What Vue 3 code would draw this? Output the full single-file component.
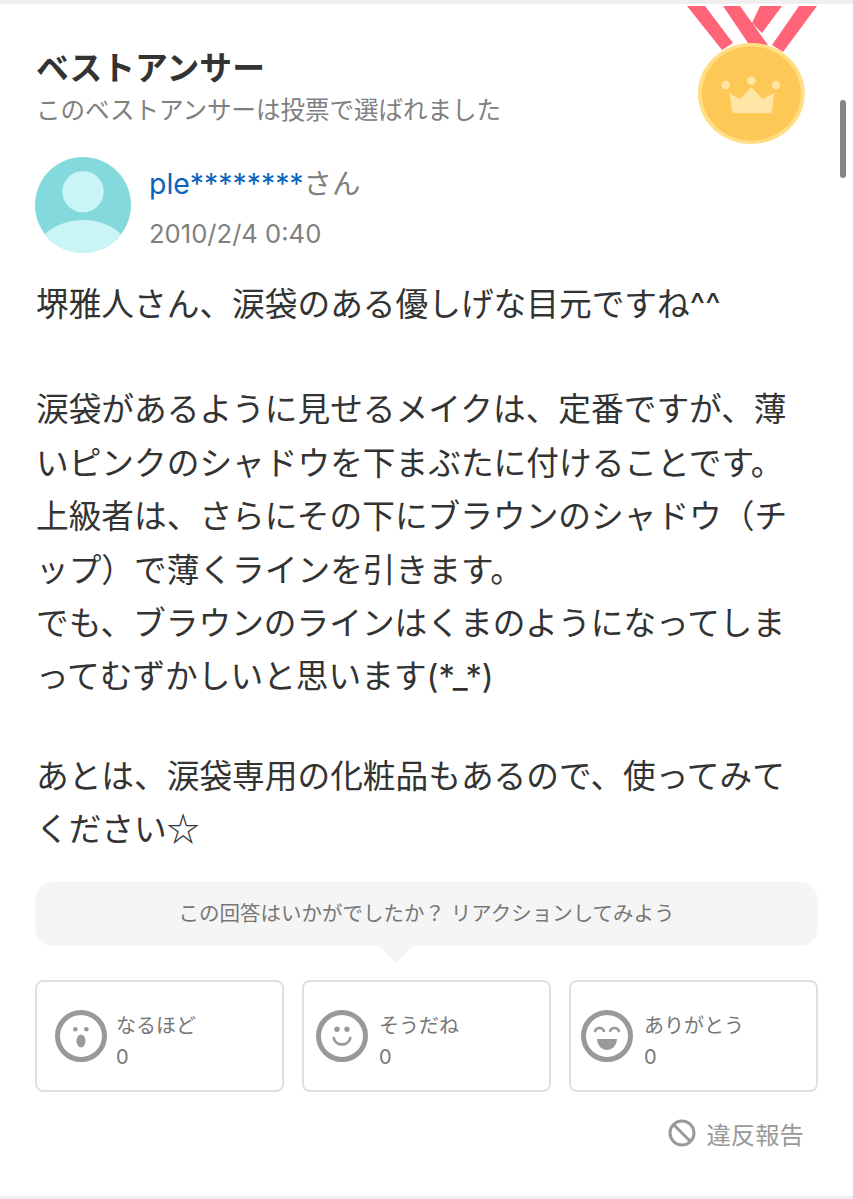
<script setup>
const reactions = [
  { label: 'なるほど', count: 0, face: 'wow' },
  { label: 'そうだね', count: 0, face: 'smile' },
  { label: 'ありがとう', count: 0, face: 'laugh' }
]

const paragraphs = [
  '堺雅人さん、涙袋のある優しげな目元ですね^^',
  '涙袋があるように見せるメイクは、定番ですが、薄いピンクのシャドウを下まぶたに付けることです。\n上級者は、さらにその下にブラウンのシャドウ（チップ）で薄くラインを引きます。\nでも、ブラウンのラインはくまのようになってしまってむずかしいと思います(*_*)',
  'あとは、涙袋専用の化粧品もあるので、使ってみてください☆'
]
</script>

<template>
  <main class="card">
    <svg class="medal" viewBox="0 0 132 146" width="132" height="146">
      <path d="M0 0H18L46 37L35 44Z" fill="#ff6478" />
      <path d="M73 0H95L75 27L65 17Z" fill="#ff6478" />
      <path d="M36 0H53L81 39L61 37Z" fill="#ff6478" />
      <path d="M112 0H130L96 46L85 39Z" fill="#ff6478" />
      <ellipse cx="64.300" cy="87.500" rx="53.500" ry="50.500" fill="#ffde85" />
      <ellipse cx="64.300" cy="87.500" rx="49.500" ry="47" fill="#fec857" />
      <circle cx="38.700" cy="79" r="4.300" fill="#ffe6a6" />
      <circle cx="64.300" cy="74.700" r="4.300" fill="#ffe6a6" />
      <circle cx="89" cy="79" r="4.300" fill="#ffe6a6" />
      <path d="M42.300 86.700L53 93.300L64.300 81.300L75.700 93.300L87.300 86.700L84.700 107.300H45.700Z" fill="#ffe6a6" />
    </svg>
    <div class="scrollbar"></div>

    <h2 class="title">ベストアンサー</h2>
    <p class="subtitle">このベストアンサーは投票で選ばれました</p>

    <div class="user">
      <svg class="avatar" viewBox="0 0 96 96" width="96" height="96">
        <circle cx="48" cy="48" r="48" fill="#84d9dc" />
        <circle cx="48" cy="34.700" r="20.700" fill="#c9f5f6" />
        <path d="M10 77C20 68 33 63 48 63C63 63 76 68 86 77C77 89 63 96 48 96C33 96 19 89 10 77Z" fill="#c9f5f6" />
      </svg>
      <div class="user-info">
        <div class="name"><span class="name-link">ple********</span>さん</div>
        <div class="date">2010/2/4 0:40</div>
      </div>
    </div>

    <div class="body">
      <p v-for="(text, i) in paragraphs" :key="i">{{ text }}</p>
    </div>

    <div class="prompt">この回答はいかがでしたか？ リアクションしてみよう</div>

    <div class="reactions">
      <div v-for="r in reactions" :key="r.label" class="reaction" :class="r.face">
        <svg viewBox="0 0 52 52" width="52" height="52">
          <circle cx="26" cy="26" r="23.500" fill="none" stroke="#999" stroke-width="5" />
          <template v-if="r.face === 'wow'">
            <circle cx="20.300" cy="19.300" r="2.300" fill="#999" />
            <circle cx="31.300" cy="19.300" r="2.300" fill="#999" />
            <ellipse cx="26" cy="31" rx="4.500" ry="6.500" fill="#999" />
          </template>
          <template v-else-if="r.face === 'smile'">
            <circle cx="21" cy="19.300" r="2.700" fill="#999" />
            <circle cx="31" cy="19.300" r="2.700" fill="#999" />
            <path d="M17.700 28C19.500 36.500 32.500 36.500 34.300 28" fill="none" stroke="#999" stroke-width="2.700" stroke-linecap="round" />
          </template>
          <template v-else>
            <path d="M14 21C15.500 17 21.500 17 23 21" fill="none" stroke="#999" stroke-width="2.500" stroke-linecap="round" />
            <path d="M29 21C30.500 17 36.500 17 38 21" fill="none" stroke="#999" stroke-width="2.500" stroke-linecap="round" />
            <path d="M16 29H36C35.500 36 31 40 26 40C21 40 16.500 36 16 29Z" fill="#999" />
          </template>
        </svg>
        <div class="reaction-text">
          <div>{{ r.label }}</div>
          <div>{{ r.count }}</div>
        </div>
      </div>
    </div>

    <div class="report">
      <svg viewBox="0 0 28 28" width="28" height="28">
        <circle cx="14" cy="14" r="12" fill="none" stroke="#999" stroke-width="3" />
        <path d="M6 6L22 22" stroke="#999" stroke-width="3" />
      </svg>
      <span>違反報告</span>
    </div>
  </main>
</template>

<style>
html, body {
  background: #fff;
  overflow: hidden;
}
</style>

<style scoped>
.card {
  position: relative;
  box-sizing: border-box;
  height: 1199px;
  padding: 44px 35px 0 36px;
  border-top: 4px solid #efefef;
  border-bottom: 3px solid #efefef;
  font-family: Inter, "Noto Sans CJK JP", sans-serif;
  color: #333;
  overflow: hidden;
}
.medal {
  position: absolute;
  top: 2px;
  left: 687px;
}
.scrollbar {
  position: absolute;
  top: 96px;
  right: 7px;
  width: 6px;
  height: 78px;
  border-radius: 3px;
  background: #858585;
}
.title {
  margin: 0;
  font-size: 32.800px;
  line-height: 40px;
  font-weight: 700;
}
.subtitle {
  margin: 4px 0 0;
  font-size: 24.500px;
  line-height: 36px;
  color: #808080;
}
.user {
  display: flex;
  gap: 18px;
  margin-top: 29px;
  margin-left: -1px;
}
.user-info {
  padding-top: 7px;
}
.name {
  font-size: 28.400px;
  line-height: 40px;
  color: #808080;
}
.name-link {
  color: #0a63bd;
}
.date {
  margin-top: 12px;
  font-size: 25.600px;
  line-height: 36px;
  color: #808080;
}
.body {
  margin-top: 25px;
  padding-right: 20px;
  font-size: 32.700px;
  line-height: 53.400px;
  white-space: pre-wrap;
}
.body p {
  margin: 0 0 43px;
}
.body p:first-child {
  margin-bottom: 52px;
}
.body p:last-child {
  margin-bottom: 0;
  font-family: "Noto Sans CJK JP", sans-serif;
}
.prompt {
  position: relative;
  margin: 28px 0 0 -1px;
  height: 64px;
  border-radius: 18px;
  background: #f5f5f5;
  font-size: 20.500px;
  line-height: 64px;
  text-align: center;
  color: #777;
}
.prompt::after {
  content: "";
  position: absolute;
  left: 343px;
  bottom: -17px;
  border: 18px solid transparent;
  border-bottom: 0;
  border-top-color: #f5f5f5;
}
.reactions {
  display: grid;
  grid-template-columns: repeat(3, 1fr);
  gap: 18px;
  margin: 34px 0 0 -1px;
}
.reaction {
  display: flex;
  align-items: center;
  gap: 11px;
  box-sizing: border-box;
  height: 112px;
  padding-left: 18px;
  border: 2px solid #e0e0e0;
  border-radius: 8px;
}
.reaction.wow {
  gap: 9px;
}
.reaction.smile {
  padding-left: 12px;
}
.reaction.laugh {
  padding-left: 10px;
}
.reaction-text {
  padding-top: 12px;
  font-size: 20px;
  line-height: 31px;
  color: #777;
}
.report {
  display: flex;
  justify-content: flex-end;
  align-items: center;
  gap: 10px;
  margin-top: 24px;
  padding-right: 14px;
  font-size: 24.400px;
  color: #999;
}
</style>
